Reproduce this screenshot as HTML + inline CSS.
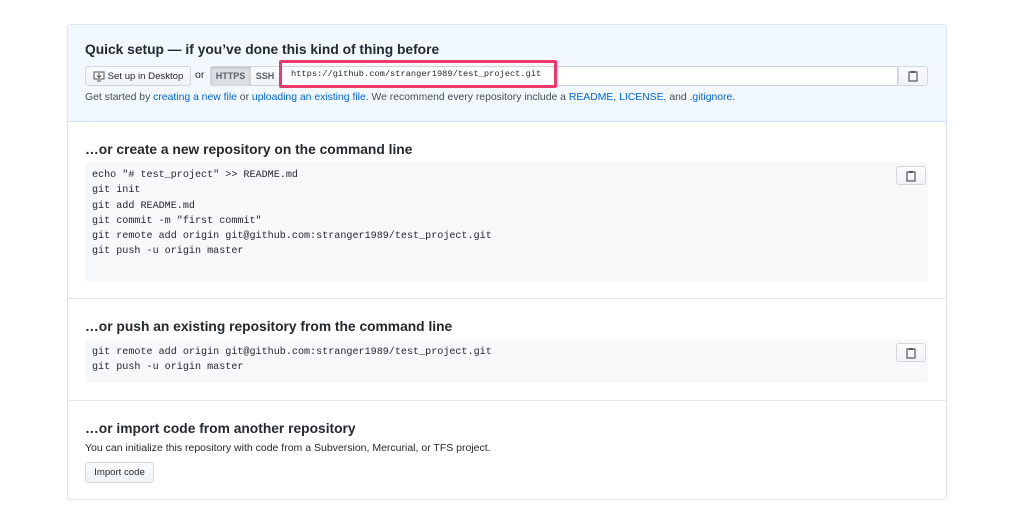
<!DOCTYPE html>
<html><head><meta charset="utf-8"><style>
*{box-sizing:border-box;margin:0;padding:0}
body{width:1024px;height:508px;background:#fff;font-family:"Liberation Sans",sans-serif;color:#24292e;position:relative;overflow:hidden}
.a{position:absolute;white-space:nowrap}
.box{position:absolute;left:67px;top:24px;width:880px;height:476px;border:1px solid #e1e4e8;border-radius:3px}
.hdr{position:absolute;left:68px;top:25px;width:878px;height:97px;background:#f1f8ff;border-bottom:1px solid #c8e1ff}
.hr{position:absolute;left:68px;width:878px;height:1px;background:#e1e4e8}
h3{position:absolute;font-size:13.8px;font-weight:bold;white-space:nowrap}
.btn{position:absolute;background:linear-gradient(#fafbfc,#eff3f6);border:1px solid #d5d8db;border-radius:3px;font-size:9px;font-weight:bold;display:flex;align-items:center;justify-content:center}
.t{font-size:10.4px;color:#444d56}
.l{color:#0366d6}
.code{position:absolute;left:85px;width:843px;background:#f6f8fa;border-radius:3px}
.mono{font-family:"Liberation Mono",monospace;font-size:10.1px;line-height:15.3px;color:#24292e;position:absolute;left:7px;white-space:pre}
</style></head><body>
<div class="box"></div>
<div class="hdr"></div>
<h3 style="left:85px;top:42px">Quick setup — if you’ve done this kind of thing before</h3>
<div class="btn" style="left:85px;top:66px;width:106px;height:20px;font-weight:normal;color:#24292e;font-size:9.6px"><svg width="12" height="11" viewBox="0 0 12 11" style="margin-right:3px"><rect x="1" y="1" width="10" height="7" fill="none" stroke="#555" stroke-width="1"/><path d="M6 2v4M4 4.5l2 2 2-2M4 10h4" stroke="#555" fill="none"/></svg>Set up in Desktop</div>
<div class="a" style="left:195px;top:69px;font-size:10.5px">or</div>
<div class="btn" style="left:210px;top:66px;width:41px;height:20px;background:#dcdfe2;border-radius:3px 0 0 3px;color:#586069;box-shadow:inset 0 1px 2px rgba(0,0,0,.15)">HTTPS</div>
<div class="btn" style="left:250px;top:66px;width:30px;height:20px;border-radius:0;color:#586069">SSH</div>
<div class="a" style="left:280px;top:66px;width:618px;height:20px;background:#fff;border:1px solid #d1d5da"></div>
<div class="a" style="left:291px;top:69px;font-family:'Liberation Mono',monospace;font-size:8.7px;color:#24292e">https://github.com/stranger1989/test_project.git</div>
<div class="a" style="left:279px;top:60px;width:278px;height:28px;border:3px solid #f0386b;border-radius:2px"></div>
<div class="btn" style="left:898px;top:66px;width:30px;height:20px"><svg width="10" height="12" viewBox="0 0 10 12"><rect x="1" y="2" width="8" height="9" fill="none" stroke="#555" stroke-width="1.2"/><rect x="3" y="1" width="4" height="2" fill="#555"/></svg></div>
<div class="a t" style="left:85px;top:92px">Get started by <span class="l">creating a new file</span> or <span class="l">uploading an existing file</span>. We recommend every repository include a <span class="l">README</span>, <span class="l">LICENSE</span>, and <span class="l">.gitignore</span>.</div>

<h3 style="left:85px;top:142px">…or create a new repository on the command line</h3>
<div class="code" style="top:162px;height:120px"><div class="mono" style="top:6px">echo "# test_project" >> README.md
git init
git add README.md
git commit -m "first commit"
git remote add origin git@github.com:stranger1989/test_project.git
git push -u origin master</div></div>
<div class="btn" style="left:896px;top:166px;width:30px;height:19px"><svg width="10" height="12" viewBox="0 0 10 12"><rect x="1" y="2" width="8" height="9" fill="none" stroke="#555" stroke-width="1.2"/><rect x="3" y="1" width="4" height="2" fill="#555"/></svg></div>
<div class="hr" style="top:298px"></div>

<h3 style="left:85px;top:319px">…or push an existing repository from the command line</h3>
<div class="code" style="top:339px;height:44px"><div class="mono" style="top:6px">git remote add origin git@github.com:stranger1989/test_project.git
git push -u origin master</div></div>
<div class="btn" style="left:896px;top:343px;width:30px;height:19px"><svg width="10" height="12" viewBox="0 0 10 12"><rect x="1" y="2" width="8" height="9" fill="none" stroke="#555" stroke-width="1.2"/><rect x="3" y="1" width="4" height="2" fill="#555"/></svg></div>
<div class="hr" style="top:400px"></div>

<h3 style="left:85px;top:421px">…or import code from another repository</h3>
<div class="a t" style="left:85px;top:442px;color:#24292e;font-size:10.5px">You can initialize this repository with code from a Subversion, Mercurial, or TFS project.</div>
<div class="btn" style="left:85px;top:462px;width:69px;height:21px;font-weight:normal;color:#24292e;font-size:9.6px">Import code</div>
</body></html>
